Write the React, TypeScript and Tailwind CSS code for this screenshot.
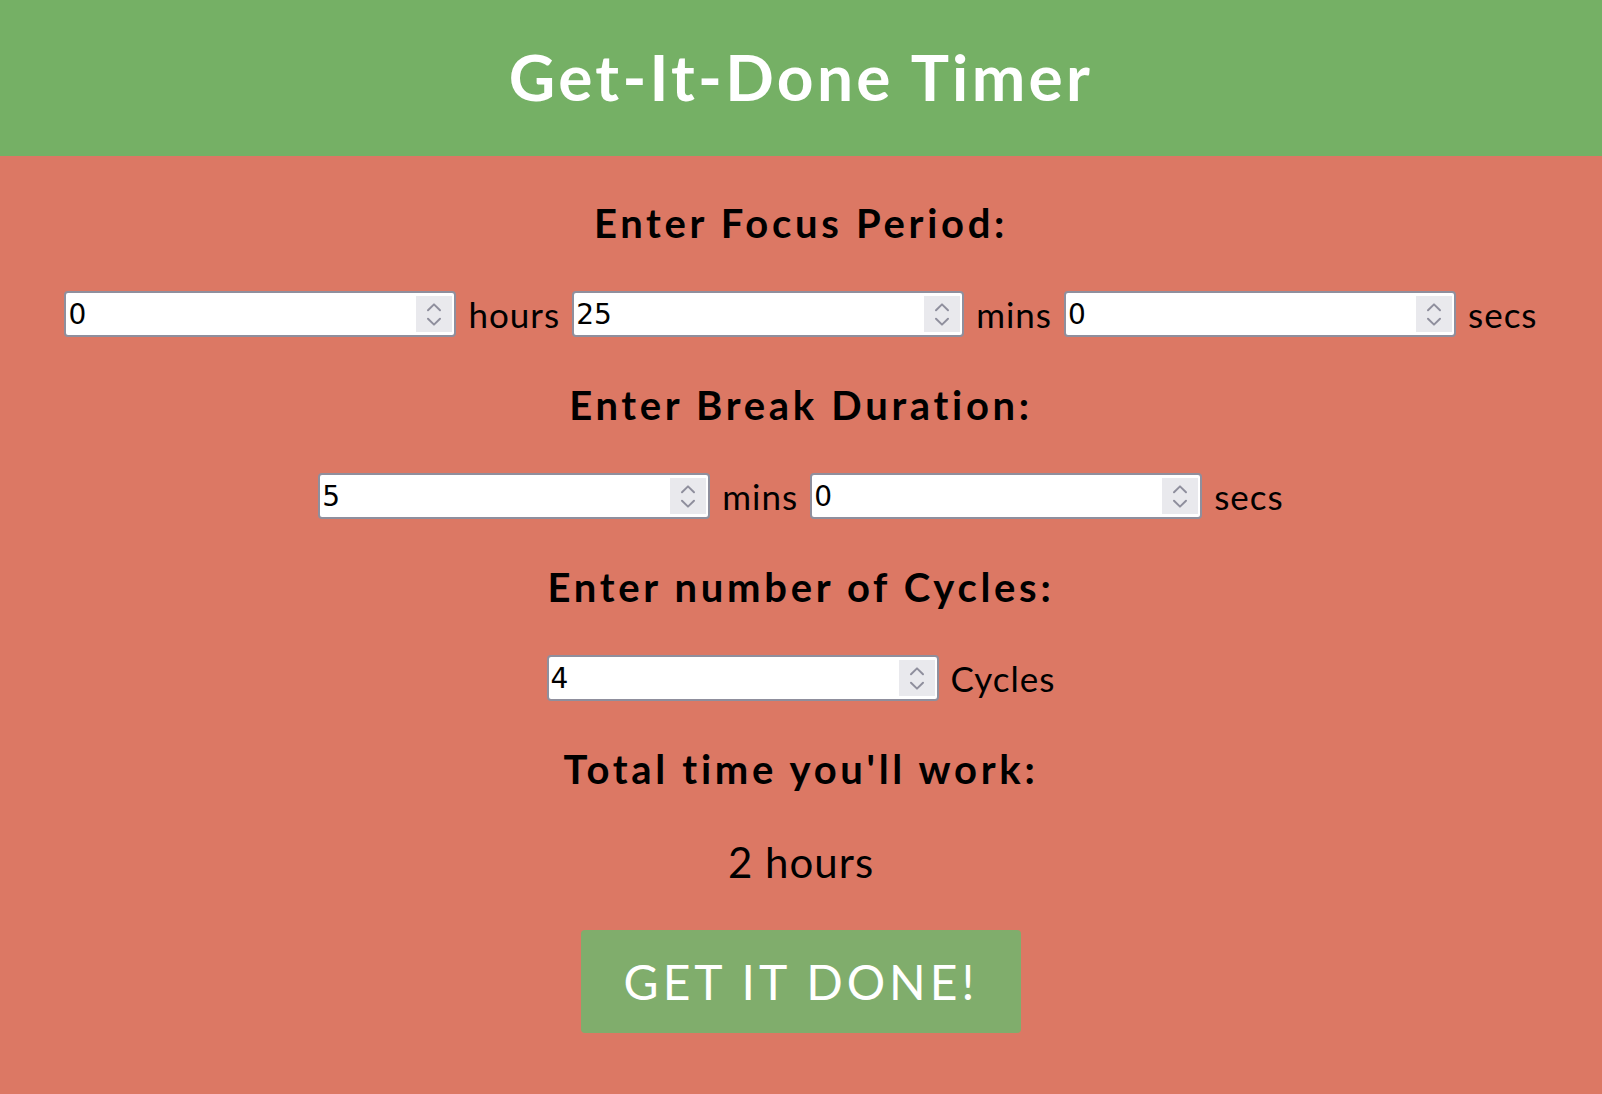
import { useState } from "react";

const sans = "font-['Lato','Noto_Sans',sans-serif]";

function Spinner() {
  return (
    <div className="mr-[2px] flex h-[36px] w-[36px] shrink-0 flex-col items-center justify-center gap-[5px] bg-[#e9e9ed]">
      <svg width="18" height="10" viewBox="0 0 18 10" fill="none">
        <path d="M3 8.2 9 2.4l6 5.8" stroke="#8f8f9d" strokeWidth="2" strokeLinecap="round" strokeLinejoin="round" />
      </svg>
      <svg width="18" height="10" viewBox="0 0 18 10" fill="none">
        <path d="M3 1.8 9 7.6l6-5.8" stroke="#8f8f9d" strokeWidth="2" strokeLinecap="round" strokeLinejoin="round" />
      </svg>
    </div>
  );
}

interface NumberFieldProps {
  value: string;
  onChange: (value: string) => void;
}

function NumberField({ value, onChange }: NumberFieldProps) {
  return (
    <div className="flex h-[46px] w-[392px] shrink-0 items-center rounded-[4px] border-2 border-[#8f8f9d] bg-white">
      <input
        type="number"
        value={value}
        onChange={(e) => onChange(e.target.value)}
        className="h-full min-w-0 flex-1 bg-transparent pl-[2px] font-['DejaVu_Sans',sans-serif] text-[28px] text-black [appearance:textfield] focus:outline-none [&::-webkit-inner-spin-button]:appearance-none [&::-webkit-outer-spin-button]:appearance-none"
      />
      <Spinner />
    </div>
  );
}

function Unit({ children }: { children: string }) {
  return <span className={`${sans} text-[35px] leading-none tracking-[1px] text-black`}>{children}</span>;
}

function Heading({ children }: { children: string }) {
  return (
    <h2 className={`${sans} flex h-[46px] items-center justify-center text-[40px] font-bold tracking-[3.7px] text-black`}>
      {children}
    </h2>
  );
}

export default function App() {
  const [hours, setHours] = useState("0");
  const [mins, setMins] = useState("25");
  const [secs, setSecs] = useState("0");
  const [breakMins, setBreakMins] = useState("5");
  const [breakSecs, setBreakSecs] = useState("0");
  const [cycles, setCycles] = useState("4");

  const focus = (Number(hours) || 0) * 3600 + (Number(mins) || 0) * 60 + (Number(secs) || 0);
  const pause = (Number(breakMins) || 0) * 60 + (Number(breakSecs) || 0);
  const total = Math.round(((focus + pause) * (Number(cycles) || 0)) / 3600);

  return (
    <div className="min-h-[1094px] bg-[#dc7864]">
      <header className="flex h-[156px] items-center justify-center bg-[#75b065]">
        <h1 className={`${sans} pb-[2px] text-[64px] font-bold tracking-[3.3px] text-white`}>Get-It-Done Timer</h1>
      </header>

      <main className="flex flex-col items-center gap-[45px] pt-[44px]">
        <Heading>Enter Focus Period:</Heading>
        <div className="flex h-[46px] items-center gap-3">
          <NumberField value={hours} onChange={setHours} />
          <Unit>hours</Unit>
          <NumberField value={mins} onChange={setMins} />
          <Unit>mins</Unit>
          <NumberField value={secs} onChange={setSecs} />
          <Unit>secs</Unit>
        </div>

        <Heading>Enter Break Duration:</Heading>
        <div className="flex h-[46px] items-center gap-3">
          <NumberField value={breakMins} onChange={setBreakMins} />
          <Unit>mins</Unit>
          <NumberField value={breakSecs} onChange={setBreakSecs} />
          <Unit>secs</Unit>
        </div>

        <Heading>Enter number of Cycles:</Heading>
        <div className="flex h-[46px] items-center gap-3">
          <NumberField value={cycles} onChange={setCycles} />
          <Unit>Cycles</Unit>
        </div>

        <Heading>Total time you'll work:</Heading>
      </main>

      <p className={`${sans} mt-[46px] text-center text-[42px] leading-[48px] tracking-[1px] text-black`}>
        {total} hours
      </p>

      <div className="flex justify-center pt-[44px]">
        <button
          type="button"
          className={`${sans} h-[103px] w-[440px] rounded-[4px] bg-[#80ad6c] text-[48px] tracking-[4px] text-white`}
        >
          GET IT DONE!
        </button>
      </div>
    </div>
  );
}
